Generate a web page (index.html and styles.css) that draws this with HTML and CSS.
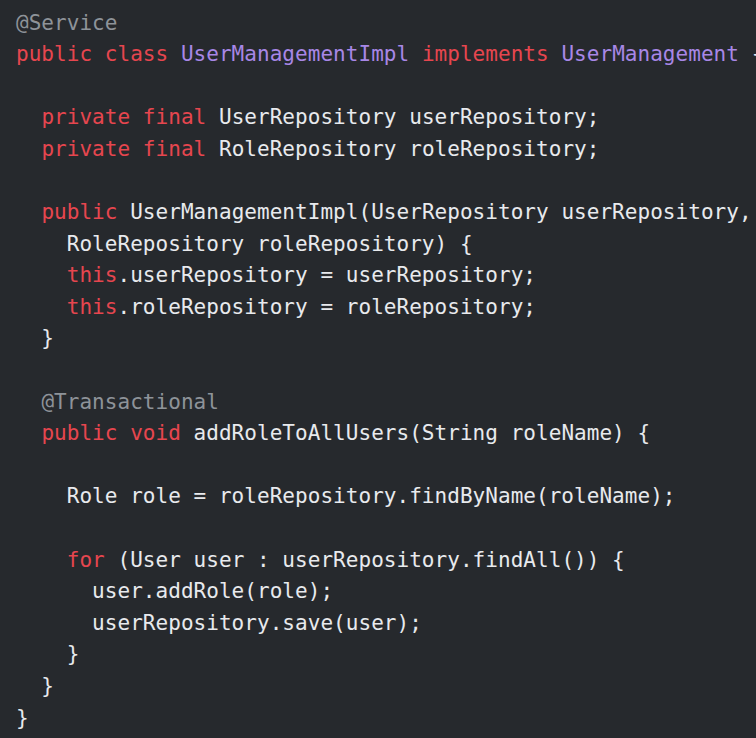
FILE: index.html
```html
<!DOCTYPE html>
<html>
<head>
<meta charset="utf-8">
<link rel="stylesheet" href="styles.css">
</head>
<body>
<pre class="code"><span class="an">@Service</span>
<span class="kw">public class</span> <span class="ty">UserManagementImpl</span> <span class="kw">implements</span> <span class="ty">UserManagement</span> {

  <span class="kw">private final</span> UserRepository userRepository;
  <span class="kw">private final</span> RoleRepository roleRepository;

  <span class="kw">public</span> UserManagementImpl(UserRepository userRepository,
    RoleRepository roleRepository) {
    <span class="kw">this</span>.userRepository = userRepository;
    <span class="kw">this</span>.roleRepository = roleRepository;
  }

  <span class="an">@Transactional</span>
  <span class="kw">public void</span> addRoleToAllUsers(String roleName) {

    Role role = roleRepository.findByName(roleName);

    <span class="kw">for</span> (User user : userRepository.findAll()) {
      user.addRole(role);
      userRepository.save(user);
    }
  }
}</pre>
</body>
</html>
```
FILE: styles.css
```css
html, body {
  margin: 0;
  padding: 0;
  background: #26292d;
  overflow: hidden;
}
.code {
  margin: 0;
  padding: 7.5px 0 0 16px;
  font-family: "DejaVu Sans Mono", monospace;
  font-size: 21px;
  letter-spacing: 0.04px;
  line-height: 31.6px;
  color: #e8eaed;
  white-space: pre;
}
.kw { color: #e6464f; }
.ty { color: #a887e6; }
.an { color: #8e9399; }
```
